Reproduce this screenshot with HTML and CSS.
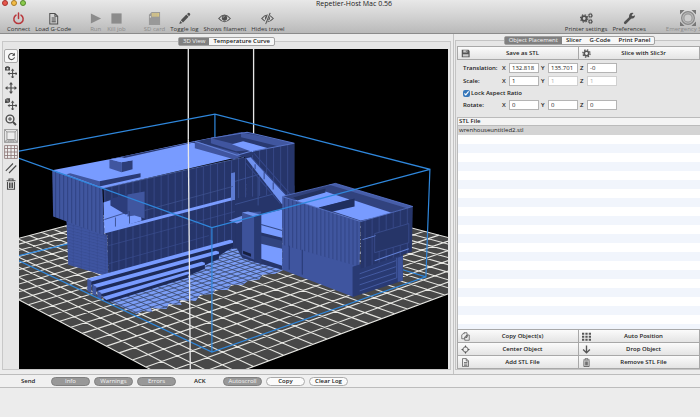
FILE: index.html
```html
<!DOCTYPE html>
<html lang="en">
<head>
<meta charset="utf-8">
<title>Repetier-Host Mac 0.56</title>
<link rel="stylesheet" href="styles.css">
</head>
<body>
<header class="titlebar">
  <div class="lights"><i class="light red"></i><i class="light amber"></i><i class="light green"></i></div>
  <h1 class="title">Repetier-Host Mac 0.56</h1>
  <nav class="toolbar">
    <div class="group">
      <button class="tool danger"><svg viewBox="0 0 14 14"><path d="M4.3 3.3a5 5 0 1 0 5.4 0M7 1v6" fill="none" stroke="currentColor" stroke-width="1.6" stroke-linecap="round"/></svg>Connect</button>
      <button class="tool"><svg viewBox="0 0 14 14"><path d="M3 1.5h5.5L11.500 4.500V13H3zM8.500 1.500v3h3M5 6.500h4.500M5 8.500h4.500M5 10.500h4.500" fill="none" stroke="currentColor" stroke-width="1.1"/></svg>Load G-Code</button>
    </div>
    <div class="group">
      <button class="tool off"><svg viewBox="0 0 14 14"><path d="M2 1.500l11 5.500-11 5.500z" fill="currentColor"/></svg>Run</button>
      <button class="tool off"><svg viewBox="0 0 14 14"><path d="M1.500 1.500h11v11h-11z" fill="currentColor"/></svg>Kill job</button>
    </div>
    <div class="group">
      <button class="tool off"><svg viewBox="0 0 14 14"><path d="M4 0h9v14H1V3z" fill="#999"/><path d="M4 1h8v4H4z" fill="#d8c583"/><path d="M5.500 1v4M7.500 1v4M9.500 1v4" stroke="#aaa" stroke-width=".5"/><path d="M2 4.500h1V6H2z" fill="#fff"/></svg>SD card</button>
      <button class="tool"><svg viewBox="0 0 14 14"><path d="M1.500 12.800l.8-3.200 2.400 2.300zM3 8.800l6-6 2.400 2.400-6 6zM9.700 2.200l1.200-1.100q.7-.5 1.400.1l.7.700q.5.700 0 1.300L11.900 4.500z" fill="currentColor"/></svg>Toggle log</button>
      <button class="tool"><svg viewBox="0 0 14 14"><path d="M.8 7Q7-.5 13.200 7 7 14 .8 7z" fill="none" stroke="currentColor" stroke-width="1.2"/><circle cx="7" cy="6.500" r="2.900" fill="currentColor"/><path d="M5.500 6Q5.800 4.900 7 4.800" fill="none" stroke="#ddd" stroke-width=".7"/></svg>Shows filament</button>
      <button class="tool"><svg viewBox="0 0 14 14"><path d="M.8 7Q7-.5 13.200 7 7 14 .8 7z" fill="none" stroke="currentColor" stroke-width="1.200"/><circle cx="7" cy="6.500" r="2.700" fill="currentColor"/><path d="M9.500 1L4.500 13" stroke="#d0d0d0" stroke-width="2.500"/><path d="M9.900 1L5 13" stroke="currentColor" stroke-width="1.100"/></svg>Hides travel</button>
    </div>
    <div class="group end">
      <button class="tool"><svg viewBox="0 0 14 14"><g fill="none" stroke="currentColor"><circle cx="4.500" cy="7" r="2.500" stroke-width="2"/><circle cx="4.500" cy="7" r="4" stroke-width="1.200" stroke-dasharray="1.600 1.540"/><circle cx="11.200" cy="3.800" r="1.600" stroke-width="1.200"/><circle cx="11.200" cy="3.800" r="2.500" stroke-width=".7" stroke-dasharray="1 .960"/><circle cx="11.200" cy="10.200" r="1.600" stroke-width="1.200"/><circle cx="11.200" cy="10.200" r="2.500" stroke-width=".7" stroke-dasharray="1 .960"/></g></svg>Printer settings</button>
      <button class="tool"><svg viewBox="0 0 14 14"><path d="M2.400 11.600L8 6" stroke="currentColor" stroke-width="2.800" stroke-linecap="round"/><path d="M12.900 3.500l-2.300 1.200-1.400-1.300L11.400 1Q8.500.3 7.100 2.300 6 4 6.800 6.300q2.300 1.300 4.500.3 1.800-.9 1.600-3.100z" fill="currentColor"/></svg>Preferences</button>
      <button class="tool off last"><svg viewBox="0 0 14 14"><path d="M0 0h4L2 2 0 4zM14 0v4l-2-2-2-2zM0 14v-4l2 2 2 2zM14 14h-4l2-2 2-2z" fill="#777"/><circle cx="7" cy="7" r="5.600" fill="#bbb" stroke="#888"/><circle cx="7" cy="7" r="3.600" fill="#ccc" stroke="#999"/></svg>Emergency Stop</button>
    </div>
  </nav>
</header>

<main class="main">
  <section class="view">
    <div class="tabs"><button class="tab on">3D View</button><button class="tab">Temperature Curve</button></div>
    <div class="frame">
      <div class="strip">
        <button class="mode pressed" aria-label="Rotate"><svg viewBox="0 0 12 12"><path d="M9.500 4A4 4 0 1 0 10 7" fill="none" stroke="currentColor" stroke-width="1.400"/><path d="M10.500 1v4h-4z" fill="currentColor"/></svg></button>
        <button class="mode" aria-label="Move camera"><svg viewBox="0 0 12 12"><use href="#arrows" transform="translate(2.500 2.500) scale(.85)"/><path d="M0 1h1l.5-.7h2L4 1h1v3.500H0z" fill="currentColor"/><circle cx="2.500" cy="2.700" r=".9" fill="#ddd"/></svg></button>
        <button class="mode" aria-label="Move view"><svg viewBox="0 0 12 12"><g id="arrows"><path d="M6 2v8M2 6h8" stroke="currentColor" stroke-width="1.200"/><path d="M6 0l2 2.500H4zM6 12l2-2.500H4zM0 6l2.500-2v4zM12 6L9.500 4v4z" fill="currentColor"/></g></svg></button>
        <button class="mode" aria-label="Move object"><svg viewBox="0 0 12 12"><use href="#arrows" transform="translate(2.500 2.500) scale(.85)"/><path d="M0 1.500L2 .3h3V4L3.500 5H0z" fill="currentColor"/><path d="M.5 2h2.500v2.500" fill="none" stroke="#ddd" stroke-width=".5"/></svg></button>
        <button class="mode" aria-label="Zoom"><svg viewBox="0 0 12 12"><circle cx="5" cy="5" r="3.900" fill="none" stroke="currentColor" stroke-width="1.400"/><path d="M5 3v4M3 5h4" stroke="currentColor"/><path d="M8 8l3 3" stroke="currentColor" stroke-width="2"/></svg></button>
        <button class="mode box" aria-label="Fit view"><svg viewBox="0 0 12 12"><path d="M.5.5h11v11H.5zM2.500 2.500h7v6.500h-7zM.5.500l2 2M11.500.500l-2 2M.5 11.500l2-2.500M11.500 11.500l-2-2.500M4 11l.5-2M6 11V9M8 11l-.5-2M1.500 10.300h9" fill="none" stroke="#888" stroke-width=".7"/></svg></button>
        <button class="mode box" aria-label="Show grid"><svg viewBox="0 0 12 12"><path d="M.5.500h11v11H.5zM3 .5v11M6 .5v11M9 .5v11M.5 3h11M.5 6h11M.5 9h11" fill="none" stroke="#8a7474" stroke-width=".7"/></svg></button>
        <button class="mode" aria-label="Parallel projection"><svg viewBox="0 0 12 12"><path d="M.8 8.800L8 1.500M4 11L11.300 3.500" stroke="currentColor" stroke-width="1.100"/></svg></button>
        <button class="mode" aria-label="Delete"><svg viewBox="0 0 12 12"><path id="bin" d="M1.500 2.800h9M4 2.500V1h4v1.500M2.500 4v7.300h7V4M4.500 4.500V10M6 4.500V10M7.500 4.500V10" fill="none" stroke="currentColor" stroke-width="1.100"/></svg></button>
      </div>
      <svg class="scene" viewBox="20 50 427 319" preserveAspectRatio="xMidYMid slice" role="img" aria-label="House model on the print bed">
        <defs>
          <pattern id="boards" width="4" height="20" patternUnits="userSpaceOnUse"><path d="M0 0h4v20H0z" fill="#40569f"/><path d="M.5 0v20" stroke="#2d4081" stroke-width=".9"/></pattern>
          <pattern id="dark" width="7" height="40" patternUnits="userSpaceOnUse"><path d="M0 0h7v40H0z" fill="#26356a"/><path d="M.5 0v40" stroke="#3d5193" stroke-width=".7"/></pattern>
          <pattern id="bricks" width="8" height="3" patternUnits="userSpaceOnUse" patternTransform="skewY(14)"><path d="M0 0h8v3H0z" fill="#3e54a0"/><path d="M0 .5h8M2 .5v2" stroke="#32468b" stroke-width=".5"/></pattern>
          <clipPath id="paving"><path d="M107 300l30 14 6-3 10 1-2-4 16 1 2-5 13 1-3-5 17 1 4-6 13-1 2-4 13 0 3-5 12 0 5-4 11-1 3-5 13-1 17-8-25-13-22-10-32 3-60 30z"/></clipPath>
        </defs>
        <path d="M20 50h427v319H20z" fill="#000"/>
        <path id="bed" fill="#484848"/>
        <path id="bed-lines" class="bed-lines"/>
        <path class="guide" d="M20 256l50-12M402 270l23 7M215 115v30"/>
        <path class="axis" d="M188.500 50v90M253.500 50v90"/>

        <g clip-path="url(#paving)"><path d="M100 230h200v90H100z" fill="#7b9df5"/><path id="joints" class="joints"/></g>

        <!-- rear block -->
        <path d="M67 215l41 21 1 41-40-12z" fill="url(#bricks)"/>
        <path d="M108 232l127-36 25-2 34-8v12l-12 30v16l-40 3-133 31z" fill="url(#dark)"/>
        <path d="M109 246l126-34M109 264l100-28" stroke="#3c5093" stroke-width=".6"/>
        <path d="M110 161l137-28 47 11v54l-48 4V157l-33 2z" fill="url(#dark)"/>
        <path d="M53 171l57-11 84-18 20-4 32 18-143 33z" fill="#789bff"/>
        <path d="M110 160l130-27 8 1-53 9-80 18z" fill="#2b3a72"/>
        <path d="M192 143l49-10 45 11-40 14-14-2z" fill="#293970"/>
        <path d="M205 150l18-6 24 10-12 4-14-3z" fill="#293970"/>
        <path d="M164 152l31-7 39 13-60 9z" fill="#789bff"/>
        <path d="M195 142v7l39 11 6-2-1-4z" fill="#40559f"/>
        <path d="M195 142l42 14 14-4" fill="none" stroke="#6381d6"/>
        <path d="M211 139v5l25 8 14-1-3-3z" fill="#40559f"/>
        <path d="M241 133v5l45 11 8-5z" fill="#40569f"/>
        <path d="M232 145l11-3 25 7-15 4z" fill="#789bff"/>
        <path d="M253 152l41-8v54l-41 4z" fill="url(#dark)"/>
        <path d="M253 152l41-8-47-11-36 6" fill="none" stroke="#5672c5"/>
        <path d="M104 189l142-31v42l-140 36z" fill="url(#dark)"/>
        <path d="M104 203l15-5 21-4v12l2 15-37 12z" fill="#7a9cff"/>
        <path d="M111 199l25-5v19l-10 2-15-9z" fill="#2c3d7b"/>
        <path d="M128 195l17-3v27l-10-3-7 1z" fill="#40569f"/>
        <path d="M105 220l25-8M116 218v9M130 212v12" stroke="#31447e" stroke-width=".8"/>
        <path d="M105 231l130-34v3l-130 34z" fill="#7a9cff"/>
        <path d="M231 174l4-1v27l-4 1z" fill="#5c7ad2"/>
        <path d="M145 211l88-24" stroke="#405491" stroke-width=".7"/>
        <path d="M53 171l50 18 2 47-51-19z" fill="url(#boards)"/>
        <path d="M53 171l50 18 141-31" fill="none" stroke="#6481d9" stroke-width=".7"/>
        <path d="M67 175l4-1 29 8v5z" fill="#40569f"/><path d="M100 182l41-8v4l-41 9z" fill="#2a3a74"/>
        <path d="M110 160l12 3v10l-12-4z" fill="#40569f"/><path d="M122 163l11-2v9l-11 3z" fill="#2d3e79"/><path d="M110 160l12 3 11-2-11-3z" fill="#789bff"/>

        <!-- link and stair -->
        <path d="M235 199l47-5v76l-22-6-18-6-7-13z" fill="#26356a"/>
        <path d="M235 182l24-7M235 205l44-12M258 178v28" stroke="#3f5598" stroke-width=".8"/>
        <path d="M261 215l21-5v28l-21-5z" fill="#789bff"/><path d="M261 236l21 5v8l-21-5z" fill="#31447f"/><path d="M261 244l21 5v17l-21-7z" fill="#789bff"/><path d="M261 225l21 6" stroke="#334989"/>
        <path d="M229 221l14-5 2 5-8 3z" fill="#7293ee"/>
        <path d="M242 213l19-1v51l-19-8z" fill="#3d529a"/><path d="M254 216l7-2v50l-7-2z" fill="#293a73"/><path d="M243 251l8 3v3l-8-3z" fill="#161f40"/><path d="M242 213l6-1 12 3-6 2z" fill="#7293ee"/>
        <path d="M246 159l5-1 38 41-7 6z" fill="#6f91ef"/><path d="M251 158l38 41M254 154l37 42M255 165v5M264 173v7M273 183v7M246 164l34 40" stroke="#34478a" fill="none"/>

        <!-- front block -->
        <path d="M282 197l53-13 77 23-52 15z" fill="#31427d"/>
        <path d="M294 201l31-9 24 8-32 9zM327 210l27-9 39 13-33 7z" fill="#789bff"/>
        <path d="M318 208l36-9v8l-26 6z" fill="#202f60"/>
        <path d="M293 198l32-9v4l-28 8z" fill="#24325f"/>
        <path d="M335 184l77 23-5 2-79-24z" fill="#465da8"/>
        <path d="M282 197l78 25-1 46-77-17z" fill="url(#boards)"/>
        <path d="M282 245l77 22v5l-6-1v26l-71-27z" fill="#3f559f"/>
        <path d="M289 246v24M302 250v25" stroke="#2c3e7b" stroke-width="1.200"/>
        <path d="M352 267l50-16v30l-50 16z" fill="#293a73"/>
        <path d="M359 274l36-13M359 279l36-12M359 285l36-12M359 291l37-13v-20" fill="none" stroke="#4a62ad" stroke-width=".8"/>
        <path d="M397 258l5-2v25l-5 1z" fill="#3c529a"/>
        <path d="M360 222l52-15-1 45-51 17z" fill="url(#dark)"/>
        <path d="M374 234l34-10v19l-34 10z" fill="#263568" stroke="#3e5295" stroke-width=".7"/><path d="M362 240l13-4M374 261l34-12" stroke="#6381d6"/>
        <path d="M282 197l78 25 52-15-77-23z" fill="none" stroke="#5874ca" stroke-width=".8"/>

        <!-- terrace steps -->
        <path d="M91 281l142-40v6l-12 8L94 292z" fill="#1d2a58"/><path d="M88 279l142-39 3 1v2L91 282z" fill="#789bff"/>
        <path d="M96 287l123-34v6l-13 6-106 32z" fill="#1d2a58"/><path d="M93 285l123-34 3 1v2L97 288z" fill="#789bff"/>
        <path d="M101 293l104-30v6l-14 6-85 27z" fill="#1d2a58"/><path d="M98 291l104-29 3 1v2l-103 29z" fill="#789bff"/>
        <path d="M106 299l82-25v4l-78 24z" fill="#1d2a58"/><path d="M103 297l84-25h3v2l-83 26z" fill="#789bff"/>
        <path d="M88 279l4 2v12l-4-2zM93 285l4 2v9l-4-2zM98 291l4 2v7l-4-2z" fill="#40569f"/>

        <path class="guide" d="M20 152l195-37 214 55-4 107-213 75L20 261M20 159l192 69 217-58M212 228v124"/>
        <path class="axis" d="M188.500 140L190.500 369"/>
      </svg>
    </div>
  </section>

  <section class="side">
    <div class="tabs"><button class="tab on">Object Placement</button><button class="tab">Slicer</button><button class="tab">G-Code</button><button class="tab">Print Panel</button></div>
    <div class="panel">
      <div class="actions">
        <button class="action tall"><svg viewBox="0 0 12 12"><path d="M1 1h9l1.500 1.500V11H1z" fill="currentColor"/><path d="M3 1.500h5.500v3H3zM2.500 7h7.500v3H2.500z" fill="#ccc"/><path d="M6.500 2h1v2h-1z" fill="currentColor"/></svg><span>Save as STL</span></button>
        <button class="action tall"><svg viewBox="0 0 12 12"><g fill="none" stroke="currentColor"><circle cx="6" cy="6" r="3" stroke-width="2.200"/><circle cx="6" cy="6" r="4.800" stroke-width="1.800" stroke-dasharray="1.900 1.870"/></g></svg><span>Slice with Slic3r</span></button>
      </div>
      <form class="form">
        <div class="row"><span class="name">Translation:</span><label>X <input value="132.818"></label><label>Y <input value="135.701"></label><label>Z <input value="-0"></label></div>
        <div class="row"><span class="name">Scale:</span><label>X <input value="1"></label><label>Y <input value="1" disabled></label><label>Z <input value="1" disabled></label></div>
        <label class="check"><input type="checkbox" checked>Lock Aspect Ratio</label>
        <div class="row"><span class="name">Rotate:</span><label>X <input value="0"></label><label>Y <input value="0"></label><label>Z <input value="0"></label></div>
      </form>
      <div class="files">
        <table><thead><tr><th>STL File</th></tr></thead><tbody><tr><td>wrenhouseuntitled2.stl</td></tr></tbody></table>
      </div>
      <div class="actions">
        <button class="action"><svg viewBox="0 0 12 12"><path d="M4 3V1h4v6H6M4 1L1 4v5h4M8 4h3v7H5V6.500zM8 4v3H5" fill="none" stroke="currentColor"/></svg><span>Copy Object(s)</span></button>
        <button class="action"><svg viewBox="0 0 12 12"><path d="M0 1h3v2.500H0zM4.500 1h3v2.500h-3zM9 1h3v2.500H9zM0 5h3v2.500H0zM4.500 5h3v2.500h-3zM9 5h3v2.500H9zM0 9h3v2.500H0zM4.500 9h3v2.500h-3zM9 9h3v2.500H9z" fill="currentColor"/></svg><span>Auto Position</span></button>
        <button class="action"><svg viewBox="0 0 12 12"><circle cx="6" cy="6" r="3.400" fill="none" stroke="currentColor"/><path d="M6 0l1.500 3h-3zM6 12l1.500-3h-3zM0 6l3-1.500v3zM12 6L9 4.500v3z" fill="currentColor"/></svg><span>Center Object</span></button>
        <button class="action"><svg viewBox="0 0 12 12"><path d="M6 .5V10M1.500 6L6 10.500 10.500 6" fill="none" stroke="currentColor" stroke-width="1.800"/></svg><span>Drop Object</span></button>
        <button class="action"><svg viewBox="0 0 12 12"><path d="M2 .800h5L10 4v7.500H2zM7 .800V4h3M4 6h4.500M4 8h4.500M4 9.800h4.500" fill="none" stroke="currentColor"/></svg><span>Add STL File</span></button>
        <button class="action"><svg viewBox="0 0 12 12"><use href="#bin"/></svg><span>Remove STL File</span></button>
      </div>
    </div>
  </section>
</main>

<footer>
  <div class="logbar">
    <span class="word">Send</span>
    <button class="pill on">Info</button><button class="pill on">Warnings</button><button class="pill on">Errors</button>
    <span class="word ack">ACK</span>
    <button class="pill on">Autoscroll</button><button class="pill">Copy</button><button class="pill">Clear Log</button>
  </div>
  <div class="log"></div>
</footer>
<script src="bed.js"></script>
</body>
</html>
```
FILE: styles.css
```css
* { box-sizing: border-box; }
body {
  margin: 0;
  min-height: 100vh;
  display: flex;
  flex-direction: column;
  overflow-x: hidden;
  background: #ececec;
  color: #1a1a1a;
  font: 6px/8px "Open Sans", "Noto Sans", sans-serif;
}
button, input { font: inherit; color: inherit; margin: 0; padding: 0; border: 0; background: none; }
svg { display: block; }

.titlebar {
  position: relative;
  height: 34px;
  background: linear-gradient(#e8e8e8, #d2d2d2 50%, #b9b9b9);
  border-bottom: 1px solid #8b8b8b;
  overflow: hidden;
}
.lights { position: absolute; left: 2px; top: 0; display: flex; gap: 3px; }
.light { width: 6px; height: 6px; border-radius: 50%; border: 1px solid #777; }
.red { background: #e6574c; border-color: #a5332d; }
.amber { background: #f3bd47; border-color: #a77b28; }
.green { background: #8ccb4e; border-color: #55882c; }
.title { margin: 0; font-size: 7px; line-height: 8px; font-weight: 400; text-align: center; padding-left: 8px; }

.toolbar { display: flex; gap: 18px; padding: 4px 0 0 7px; }
.group { display: flex; gap: 5px; }
.end { margin-left: auto; margin-right: -11px; }
.tool { display: flex; flex-direction: column; align-items: center; gap: 1px; white-space: nowrap; color: #333; }
.tool svg { width: 13px; height: 13px; color: #505050; margin-bottom: -1px; }
.tool.danger svg { color: #b8363b; }
.tool.off, .tool.off svg { color: #8c8c8c; }
.last { margin-left: 15px; }
.tool.last svg { width: 16px; height: 16px; margin: -2px 0; }

.main { flex: 1; display: grid; grid-template-columns: minmax(0, 1fr) 246px; border-bottom: 1px solid #bcbcbc; }
.view { display: flex; flex-direction: column; padding: 3px 2px 4px; border-right: 1px solid #c4c4c4; }
.side { display: flex; flex-direction: column; padding: 2px 0 4px 1px; min-width: 0; }

.tabs { position: relative; z-index: 1; align-self: center; display: flex; border: 1px solid #a2a2a2; border-radius: 2px; background: #f7f7f7; margin-bottom: -5px; }
.side .tabs { margin-left: 4px; }
.tab { padding: 0 4px; font-weight: 600; line-height: 7px; white-space: nowrap; }
.tab.on { background: #808080; color: #f4f4f4; font-weight: 400; }

.frame { flex: 1; display: flex; min-height: 0; padding: 7px 2px 0 1px; border: 1px solid #c8c8c8; background: #e6e6e6; }
.strip { width: 14px; display: flex; flex-direction: column; gap: 2px; align-items: center; }
.mode { width: 14px; height: 14px; display: grid; place-items: center; color: #4c4c4c; }
.mode svg { width: 12px; height: 12px; }
.pressed { border: 1px solid #aaa; border-radius: 2px; background: #f8f8f8; }
.pressed svg { width: 9px; height: 9px; }
.box svg { width: 14px; height: 14px; background: #eee; }
.scene { flex: 1; min-width: 0; width: 0; height: auto; margin-left: 1px; contain: size; }
.bed-lines { fill: none; stroke: #e6e6e2; stroke-width: 1.1; }
.joints { fill: none; stroke: #3a4769; stroke-width: .8; }
.guide { fill: none; stroke: #2f87dc; stroke-width: 1.2; }
.axis { fill: none; stroke: #e8e8e8; stroke-width: 1.3; }

.panel { flex: 1; display: flex; flex-direction: column; padding: 5px 0 0 1px; border: 1px solid #c4c4c4; border-right: 0; background: #e6e6e6; }
.actions { display: grid; grid-template-columns: 1fr 1fr; border-left: 1px solid #a8a8a8; border-top: 1px solid #a8a8a8; }
.action { height: 13px; display: flex; align-items: center; padding: 0 3px; border: solid #a8a8a8; border-width: 0 1px 1px 0; background: linear-gradient(#fbfbfb, #e4e4e4); font-weight: 600; }
.action svg { width: 9px; height: 9px; color: #555; }
.action span { flex: 1; text-align: center; }
.tall { height: 13px; }
.form { display: flex; flex-direction: column; gap: 3px; padding: 3px 6px 7px; font-weight: 600; }
.row { display: flex; gap: 2px; align-items: center; }
.name { width: 37px; }
.row label { display: flex; width: 37px; align-items: center; justify-content: space-between; }
.row input { width: 30px; height: 10px; padding: 0 2px; border: 1px solid #b4b4b4; background: #fff; font-weight: 500; }
.row input:disabled { color: #aaa; border-color: #d0d0d0; }
.check { display: flex; align-items: center; gap: 1px; height: 8px; }
.check input { width: 7px; height: 7px; accent-color: #3677ba; }
.files { flex: 1; border-left: 1px solid #bbb; background: repeating-linear-gradient(#fff 0 9px, #f1f5fc 9px 18px); }
.files table { width: 100%; border-collapse: collapse; }
.files th, .files td { padding: 0 1px; height: 8px; text-align: left; line-height: 7px; font-weight: 600; }
.files th { background: #f4f4f4; border: solid #bbb; border-width: 1px 0; }
.files td { height: 9px; background: #d4d4d4; font-weight: 400; }

.logbar { display: flex; align-items: center; gap: 4px; height: 13px; padding-left: 21px; background: #f0f0f0; border-bottom: 1px solid #bcbcbc; }
.word { width: 26px; font-weight: 600; }
.ack { padding-left: 14px; width: 39px; }
.pill { width: 39px; height: 9px; line-height: 7px; border: 1px solid #aaa; border-radius: 5px; background: #fbfbfb; font-weight: 600; }
.pill.on { background: #989898; border-color: #808080; color: #f4f4f4; font-weight: 400; }
.log { height: 29px; }
```
FILE: bed.js
```js
// Print bed corners on screen: front, right, back, left.
const [F, R, B, L] = [[190, 390], [535, 261], [234, 182], [-57, 259]];

// Projective map from the unit square to the bed.
const sx = F[0] - R[0] + B[0] - L[0], sy = F[1] - R[1] + B[1] - L[1];
const dx1 = R[0] - B[0], dy1 = R[1] - B[1], dx2 = L[0] - B[0], dy2 = L[1] - B[1];
const det = dx1 * dy2 - dx2 * dy1;
const g = (sx * dy2 - dx2 * sy) / det, h = (dx1 * sy - sx * dy1) / det;

function project(u, v) {
  const w = g * u + h * v + 1;
  return [0, 1].map(i => ((R[i] - F[i] + g * R[i]) * u + (L[i] - F[i] + h * L[i]) * v + F[i]) / w).map(n => n.toFixed(1));
}

function grid(cols, rows) {
  let d = '';
  for (let i = 0; i <= cols; i++) d += `M${project(i / cols, 0)}L${project(i / cols, 1)}`;
  for (let i = 0; i <= rows; i++) d += `M${project(0, i / rows)}L${project(1, i / rows)}`;
  return d;
}

document.getElementById('bed').setAttribute('d', `M${F}L${R}L${B}L${L}Z`);
document.getElementById('bed-lines').setAttribute('d', grid(26, 23));
document.getElementById('joints').setAttribute('d', grid(46, 52));
```
